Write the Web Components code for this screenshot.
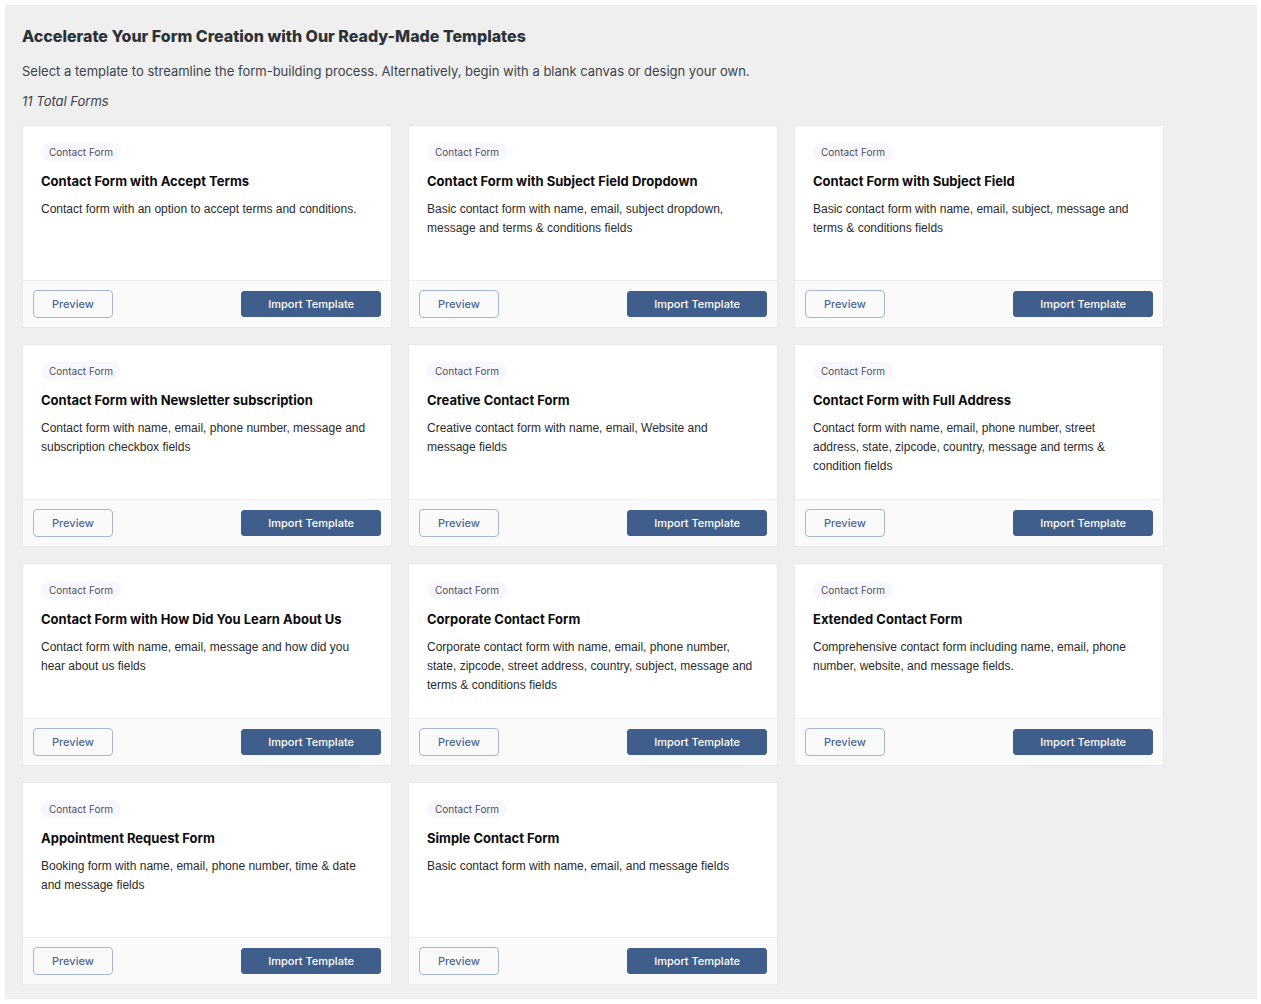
<!DOCTYPE html>
<html lang="en">
<head>
<meta charset="utf-8">
<meta name="viewport" content="width=device-width, initial-scale=1">
<title>Form Templates</title>
<style>
  body { margin: 5px 4px 5px 5px; background: #fff; font-family: Inter, "Liberation Sans", sans-serif; }
</style>
</head>
<body>
<template-gallery>
  <span slot="heading">Accelerate Your Form Creation with Our Ready-Made Templates</span>
  <span slot="intro">Select a template to streamline the form-building process. Alternatively, begin with a blank canvas or design your own.</span>
  <span slot="count">11 Total Forms</span>
  <template-card><span slot="title">Contact Form with Accept Terms</span>Contact form with an option to accept terms and conditions.</template-card>
  <template-card><span slot="title">Contact Form with Subject Field Dropdown</span>Basic contact form with name, email, subject dropdown, message and terms &amp; conditions fields</template-card>
  <template-card><span slot="title">Contact Form with Subject Field</span>Basic contact form with name, email, subject, message and terms &amp; conditions fields</template-card>
  <template-card><span slot="title">Contact Form with Newsletter subscription</span>Contact form with name, email, phone number, message and subscription checkbox fields</template-card>
  <template-card><span slot="title">Creative Contact Form</span>Creative contact form with name, email, Website and message fields</template-card>
  <template-card><span slot="title">Contact Form with Full Address</span>Contact form with name, email, phone number, street address, state, zipcode, country, message and terms &amp; condition fields</template-card>
  <template-card><span slot="title">Contact Form with How Did You Learn About Us</span>Contact form with name, email, message and how did you hear about us fields</template-card>
  <template-card><span slot="title">Corporate Contact Form</span>Corporate contact form with name, email, phone number, state, zipcode, street address, country, subject, message and terms &amp; conditions fields</template-card>
  <template-card><span slot="title">Extended Contact Form</span>Comprehensive contact form including name, email, phone number, website, and message fields.</template-card>
  <template-card><span slot="title">Appointment Request Form</span>Booking form with name, email, phone number, time &amp; date and message fields</template-card>
  <template-card><span slot="title">Simple Contact Form</span>Basic contact form with name, email, and message fields</template-card>
</template-gallery>

<template id="gallery">
  <style>
    :host { display: block; box-sizing: border-box; padding: 20px 17px 14px; background: #efefef; color: #3c434a; }
    h1 { margin: 0; font-size: 16px; line-height: 22px; font-weight: 800; color: #2c3338; }
    .intro { margin: 14px 0 0; font-size: 13px; line-height: 20px; }
    .count { margin: 10px 0 0; font-size: 13px; line-height: 20px; font-style: italic; }
    .grid { display: grid; grid-template-columns: repeat(auto-fill, 370px); gap: 16px; margin-top: 14px; }
  </style>
  <h1><slot name="heading"></slot></h1>
  <p class="intro"><slot name="intro"></slot></p>
  <p class="count"><slot name="count"></slot></p>
  <div class="grid"><slot></slot></div>
</template>

<template id="card">
  <style>
    :host { display: flex; flex-direction: column; box-sizing: border-box; border: 1px solid #e9e9ea; background: #fff; }
    .body { flex: 1; box-sizing: border-box; min-height: 154px; padding: 17px 20px 12px 18px; }
    .tag { display: block; width: fit-content; padding: 0 8px; border-radius: 9px; background: #f8f7fd; color: #50505a; font-size: 10px; line-height: 18px; }
    h2 { margin: 10px 0 0; font-size: 13px; line-height: 20px; font-weight: 700; color: #0c0c0d; }
    p { margin: 9px 0 0; font-family: "Liberation Sans", sans-serif; font-size: 12px; line-height: 19px; color: #2a2a2c; }
    footer { display: flex; justify-content: space-between; align-items: center; padding: 9px 10px; border-top: 1px solid #f0f0f1; background: #fafafa; }
  </style>
  <div class="body">
    <span class="tag">Contact Form</span>
    <h2><slot name="title"></slot></h2>
    <p><slot></slot></p>
  </div>
  <footer>
    <action-button>Preview</action-button>
    <action-button class="primary">Import Template</action-button>
  </footer>
</template>

<template id="action">
  <style>
    :host { display: block; }
    button { display: block; box-sizing: border-box; height: 28px; padding: 0 18px; border: 1px solid #a9b8d2; border-radius: 4px; background: #fafafa; color: #4a6797; font-family: inherit; font-size: 11px; line-height: 20px; font-weight: 500; cursor: pointer; }
    :host(.primary) button { height: 26px; padding: 0 26px; border-color: #3f5e8c; border-radius: 3px; background: #3f5e8c; color: #fff; }
  </style>
  <button type="button"><slot></slot></button>
</template>

<script>
  const define = (name, id) => customElements.define(name, class extends HTMLElement {
    constructor() {
      super();
      this.attachShadow({ mode: "open" }).append(document.getElementById(id).content.cloneNode(true));
    }
  });
  define("action-button", "action");
  define("template-card", "card");
  define("template-gallery", "gallery");
</script>
</body>
</html>
